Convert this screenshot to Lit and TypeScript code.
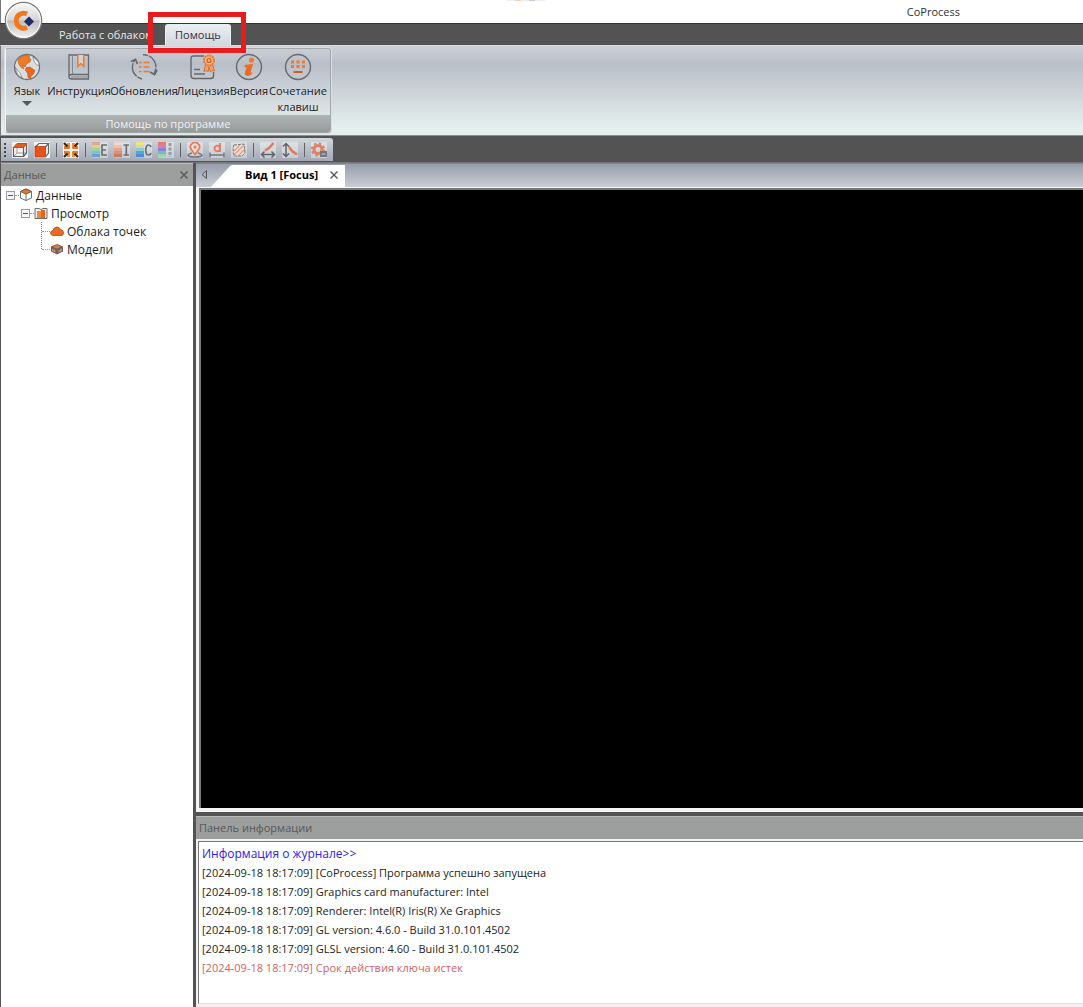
import { LitElement, html, svg, css, nothing } from "lit";
import { customElement, state } from "lit/decorators.js";
import { classMap } from "lit/directives/class-map.js";

const O = "#ee7a2b";
const D = "#66696d";

const bigIcons: Record<string, unknown> = {
  globe: svg`<circle cx="14" cy="14" r="12.5" fill="#d9dce0" stroke="#707377" stroke-width="1.3"/>
    <path d="M5 6.5Q9 2 14.500 1.800L17 4L15 5.500L18 6L17 9L13.500 11L12 14L9.500 12.500L11 16L8 14.500L5.500 10.500Z" fill="#f27a25" stroke="#a75420" stroke-width=".5"/>
    <path d="M13 14.500L17 14L22 17.500L20.500 21L18 23.500L17.500 26L15 24.500L14.500 20L12.500 17.500Z" fill="#f0641c" stroke="#a75420" stroke-width=".5"/>
    <path d="M20 4L25.500 9L26 13L23 11L21 8ZM2 14L7 20L9 25L5 22Z" fill="#f4f4f4" stroke="#6c6e72" stroke-width=".6"/>`,
  book: svg`<path d="M4 24V2H23.500V21.500H6.500Q4 21.500 4 24Q4 26 6.500 26H23.500V22" fill="none" stroke="${D}" stroke-width="1.3"/>
    <path d="M7.500 2V21" stroke="#85878a"/><path d="M6 24H23" stroke="#85878a"/>
    <path d="M12.800 2V13.500L15.800 10.500L18.800 13.500V2" fill="#d9d2cf" stroke="${O}" stroke-width="1.500"/>`,
  update: svg`<path d="M12 26A12.200 12.200 0 0 1 4.500 7.500M13 1.800A12.200 12.200 0 0 1 24.300 20" fill="none" stroke="${D}" stroke-width="1.400" stroke-dasharray="5 1 14 1"/>
    <path d="M1 8.500L5.500 6.500L7.500 11M20 19L24.500 21.500L27 17" fill="none" stroke="${D}" stroke-width="1.800"/>
    <path d="M9 9.500h2.500M9 14h2.500M9 18.500h2.500M13.500 9.500h6M13.500 14h6M13.500 18.500h6" stroke="${O}" stroke-width="1.500"/>`,
  license: svg`<path d="M15 3H4.500Q2 3 2 5.500V22.500Q2 25.500 5 25.500H22Q24.500 25.500 24.500 23V19" fill="none" stroke="${D}" stroke-width="1.400"/>
    <path d="M5 16.500H11M5 21H16" stroke="${D}" stroke-width="1.300"/>
    <path d="M16.500 11.500L15 18.500L17.500 17.500L19 19L20 14L21.500 19L23 17.500L25.500 18L23.500 11.500" fill="#e6a37a" stroke="#d5702d"/>
    <circle cx="20" cy="7.500" r="5" fill="#efb48c" stroke="${O}" stroke-width="2" stroke-dasharray="2 .6"/>
    <circle cx="20" cy="7.500" r="2" fill="none" stroke="#c8601e" stroke-width="1.200"/>`,
  info: svg`<circle cx="14" cy="14" r="12.500" fill="none" stroke="${D}" stroke-width="1.400"/>
    <circle cx="16.500" cy="7" r="2.600" fill="${O}"/>
    <path d="M10 11.800L18 11L15.500 19.500Q15.500 20.500 18 18.500Q16 23 12.500 23Q9 22.500 10 19L11.500 14.500L9.500 14Z" fill="#ee6c22"/>`,
  keys: svg`<circle cx="14" cy="14" r="12.500" fill="none" stroke="${D}" stroke-width="1.400"/>
    <g fill="${O}"><rect x="7" y="7.500" width="3" height="3"/><rect x="12.500" y="7.500" width="3" height="3"/><rect x="18" y="7.500" width="3" height="3"/>
    <rect x="7" y="12" width="3" height="3"/><rect x="12.500" y="12" width="3" height="3"/><rect x="18" y="12" width="3" height="3"/>
    <rect x="9.500" y="18" width="9" height="2" fill="#d95a1c"/></g>`,
};

const bars = (colors: string[]) =>
  colors.map((c, i) => svg`<rect x="0" y="${i * 3}" width="8" height="3.200" fill="${c}"/>`);

const smallIcons: Record<string, unknown> = {
  boxTop: svg`<path d="M5 5V11H14M5 11L1.500 14.500" fill="none" stroke="#9b9ea1"/><path d="M1.500 5.500H11.500V14.500H1.500ZM11.500 14.500L14.500 11V2" fill="none" stroke="#5d6063" stroke-width="1.200"/><path d="M1.200 5.500L5 1.500H15L11.500 5.500Z" fill="#ea5a1d" stroke="#b5532c"/>`,
  boxFront: svg`<path d="M1 5L5 1.500H14.500L11.500 5M14.500 1.500V11L11.500 15" fill="none" stroke="#64676a" stroke-width="1.200"/><rect x="1" y="4.500" width="10.500" height="10.500" fill="#ea5317" stroke="#a6421b" stroke-width=".8"/>`,
  fit: svg`<path d="M4 1H7V6.500H4ZM9 1H12V6.500H9ZM4 9.500H7V15H4ZM9 9.500H12V15H9Z" fill="#f58f2c"/><path d="M1 4H6.500V7H1ZM9.500 4H15V7H9.500ZM1 9H6.500V12H1ZM9.500 9H15V12H9.500Z" fill="#f0741f"/><path d="M1 1L4.500 4.500M15 1L11.500 4.500M1 15L4.500 11.500M15 15L11.500 11.500" stroke="#3b2a20" stroke-width="2.400"/>`,
  e: svg`${bars(["#e2a58e", "#ead07d", "#9ed3a0", "#76c2d6", "#6ba3cf"])}<path d="M15 3H10V13H15M10 8H14" fill="none" stroke="#6d6f73" stroke-width="1.700"/>`,
  i: svg`${bars(["#f1d4cb", "#edbfb1", "#e4a594", "#dc8e79", "#cf7860"])}<path d="M9.500 3H15M9.500 13H15M12.300 3V13" fill="none" stroke="#6d6f73" stroke-width="1.700"/>`,
  c: svg`${bars(["#efe08a", "#d6dc93", "#8ccbd3", "#4fa9dc", "#4e8dd0"])}<path d="M15 5Q14.500 3 12.500 3Q9.800 3 9.800 8Q9.800 13 12.500 13Q14.500 13 15 11" fill="none" stroke="#6d6f73" stroke-width="1.700"/>`,
  scale: svg`<g>${bars(["#e57a74", "#d281b3", "#8c83cf", "#6cbbd2", "#9ad7a6"])}</g><path d="M12 1V15" stroke="#999ca0" stroke-width="3" stroke-dasharray="3 1.500"/>`,
  pin: svg`<path d="M5 11Q1 12 1 13.500Q2 15 8 15T15 13.500Q15 12 11 11" fill="none" stroke="#74777b" stroke-width="1.600"/><path d="M8 12.500L4.300 7.500A4.500 4.500 0 1 1 11.700 7.500Z" fill="#f0ddd5" stroke="#e07b5c" stroke-width="1.700"/><circle cx="8" cy="5" r="1.500" fill="#e07b5c"/>`,
  dist: svg`<path d="M11 1V10M11 7A2.800 2.800 0 1 1 11 6" fill="none" stroke="#e07b5c" stroke-width="1.800"/><path d="M1 10.500V15.500M15 10.500V15.500M1 13H15" stroke="#74777b" stroke-width="1.500"/>`,
  area: svg`<path d="M4 3L13 2L14 11L11 14H3L2 6Z" fill="#eeddd5"/><path d="M3 9L9 3M3 13L13 3M7 14L14 7" stroke="#e2a085" stroke-width="1.300"/><path d="M3 3L13 2L14 11L11 14H3L2 6Z" fill="none" stroke="#777a7e" stroke-dasharray="3 1"/>`,
  horiz: svg`<path d="M5 8.500L9 6L13.500 1" fill="none" stroke="#e07b5c" stroke-width="2.600"/><path d="M2 12.500H14M4.500 9.500L1.500 12.500L4.500 15.500M11.500 9.500L14.500 12.500L11.500 15.500" fill="none" stroke="#606366" stroke-width="1.500"/>`,
  vert: svg`<path d="M7 5L10 9L15 12.500" fill="none" stroke="#e07b5c" stroke-width="2.600"/><path d="M4 2V14M1 4.500L4 1.500L7 4.500M1 11.500L4 14.500L7 11.500" fill="none" stroke="#606366" stroke-width="1.500"/>`,
  gear: svg`<circle cx="7" cy="7.500" r="4" fill="none" stroke="#dd8065" stroke-width="3"/><circle cx="7" cy="7.500" r="6.200" fill="none" stroke="#dd8065" stroke-width="1.800" stroke-dasharray="2.500 2.370"/><rect x="9" y="9" width="7" height="6" fill="#74777b"/><path d="M10.500 12H14.500" stroke="#c9cbce"/>`,
};

const treeIcons: Record<string, unknown> = {
  cube: svg`<path d="M7 1L12.500 3.500V10L7 12.500L1.500 10V3.500Z" fill="#fff" stroke="#6c6e70"/><path d="M7 1L12.500 3.500L7 6L1.500 3.500Z" fill="#ee7224" stroke="#7d5a48"/><path d="M7 6V13" stroke="#6c6e70"/>`,
  view: svg`<path d="M1 2.500H5L7 3.500L9 2.500H13V12.500H1Z" fill="#f9ede4" stroke="#6d6f71"/><rect x="3" y="5" width="4" height="7" fill="#ee8a3b"/><rect x="7" y="4" width="4" height="8" fill="#e8651d"/>`,
  cloud: svg`<path d="M3 11.500Q.500 11 .500 8.800Q.800 6.800 3 6.500Q4 3 7 3Q9.500 3 10.500 5.500Q13.500 6.200 13.500 9Q13.500 11.500 11 11.500Z" fill="#ee6a1e" stroke="#9d4716" stroke-width=".8"/>`,
  model: svg`<path d="M7 2L13 4.500V9.500L7 12.500L1 9.500V4.500Z" fill="#6b6562"/><path d="M7 3L11 4.700L7 6.500L3 4.700Z" fill="#ed7a34"/><path d="M2 6.500L5.500 8.500V10.500L2 9ZM8.500 8.500L12 6.500V9L8.500 10.500Z" fill="#d98a5c"/>`,
};

const ribbon = [
  { icon: "globe", label: "Язык", drop: true },
  { icon: "book", label: "Инструкция" },
  { icon: "update", label: "Обновления" },
  { icon: "license", label: "Лицензия" },
  { icon: "info", label: "Версия" },
  { icon: "keys", label: "Сочетание клавиш" },
];

const tools: [string, string][][] = [
  [["boxTop", "Вид сверху"], ["boxFront", "Вид спереди"]],
  [["fit", "Показать всё"]],
  [["e", "Высота"], ["i", "Интенсивность"], ["c", "Цвет"], ["scale", "Шкала"]],
  [["pin", "Точка"], ["dist", "Расстояние"], ["area", "Площадь"]],
  [["horiz", "По горизонтали"], ["vert", "По вертикали"]],
  [["gear", "Настройки"]],
];

const stamp = "[2024-09-18 18:17:09]";
const log = [
  { text: "[CoProcess] Программа успешно запущена" },
  { text: "Graphics card manufacturer: Intel" },
  { text: "Renderer: Intel(R) Iris(R) Xe Graphics" },
  { text: "GL version: 4.6.0 - Build 31.0.101.4502" },
  { text: "GLSL version: 4.60 - Build 31.0.101.4502" },
  { text: "Срок действия ключа истек", error: true },
];

const closeGlyph = html`<svg width="8" height="8" viewBox="0 0 8 8"><path d="M0.500 0.500L7.500 7.500M7.500 0.500L0.500 7.500" stroke="currentColor" stroke-width="1.400" /></svg>`;

@customElement("app-root")
export class AppRoot extends LitElement {
  static styles = css`
    :host {
      display: flex;
      flex-direction: column;
      height: 100vh;
      overflow: hidden;
      box-sizing: border-box;
      background: #535353;
      color: #1d1d1f;
      font: 11px/16px "Open Sans", "Noto Sans", sans-serif;
    }
    * { box-sizing: border-box; }
    svg { display: block; flex: none; }
    button {
      font: inherit;
      color: inherit;
      background: none;
      border: 0;
      padding: 0;
      margin: 0;
    }
    .top { position: relative; }
    .titlebar {
      height: 23px;
      padding-right: 123px;
      display: flex;
      align-items: center;
      justify-content: flex-end;
      background: linear-gradient(90deg, #eee 0 8px, #f8cdb8 8px 14px, #eee 14px 22px, #c9cbdd 22px 28px, #eee 28px) 506px 0 / 38px 1px no-repeat #fff;
      border-left: 1px solid #777;
      color: #333;
    }
    .titlebar h1 { margin: 0; font: inherit; }
    .menu {
      height: 22px;
      display: flex;
      align-items: flex-end;
      gap: 12px;
      padding-left: 59px;
      border-top: 1px solid #333;
      background: #535353;
    }
    .menu button { height: 20px; color: #e8e8e8; }
    .menu .current {
      height: 21px;
      padding: 0 9px;
      color: #303236;
      border: 1px solid #dff3f6;
      border-bottom: 0;
      border-radius: 3px 3px 0 0;
      background: linear-gradient(#eceef1, #d3d7de);
    }
    .logo { position: absolute; left: 4px; top: 1px; }
    .marker {
      position: absolute;
      left: 148px;
      top: 12px;
      width: 98px;
      height: 41px;
      border: 5px solid #e81c1f;
      pointer-events: none;
    }
    .ribbon {
      flex: none;
      height: 90px;
      padding: 2px 4px;
      display: flex;
      border-top: 1px solid #d9dde2;
      border-left: 1px solid #777;
      background: linear-gradient(#cdd1d8, #b9bfc9 18px, #c9cfd5 40px, #e4eeed 80px);
    }
    .group {
      display: flex;
      flex-direction: column;
      border: 1px solid #a4a8ab;
      border-left-color: #f2f4f5;
      border-radius: 3px;
      overflow: hidden;
      box-shadow: 0 0 0 1px #d9dfe1;
    }
    .commands {
      flex: 1;
      display: grid;
      grid-template-columns: 38px 66px 64px 54px 38px 60px;
      padding: 4px 2px 0;
      align-items: start;
    }
    .commands button {
      display: flex;
      flex-direction: column;
      align-items: center;
      gap: 2px;
      white-space: nowrap;
    }
    .commands .wrap { white-space: normal; }
    .group-title {
      height: 17px;
      line-height: 17px;
      text-align: center;
      color: #f1f1f1;
      background: linear-gradient(#b0b4b4, #979a9a);
    }
    .toolrow {
      flex: none;
      height: 28px;
      display: flex;
      padding: 2px 0 1px 1px;
      border-top: 1px solid #8d8f8f;
      border-bottom: 1px solid #777;
    }
    .toolbar {
      display: flex;
      align-items: center;
      padding: 0 3px 0 0;
      border-radius: 0 3px 0 0;
      background: linear-gradient(#d2d6dc, #a2a9b5);
    }
    .grip {
      width: 2px;
      height: 14px;
      margin: 0 3px;
      background: repeating-linear-gradient(#44474c 0 2px, transparent 2px 4px);
    }
    .tool { width: 22px; height: 22px; display: grid; place-items: center; }
    .tool svg { background: #ffffff60; }
    .bright svg { background: #f6f4f3; }
    .sep { width: 1px; height: 14px; margin: 0 3px; background: #5f6368; }
    .body {
      flex: 1;
      min-height: 0;
      display: grid;
      grid-template-columns: 192px minmax(0, 1fr);
      gap: 3px;
      padding-left: 1px;
    }
    .side { display: flex; flex-direction: column; background: #fff; }
    .caption {
      flex: none;
      height: 23px;
      margin: 0;
      padding: 0 5px 1px 3px;
      display: flex;
      align-items: center;
      justify-content: space-between;
      font: inherit;
      color: #55575a;
      background: #9d9f9e;
      border-top: 1px solid #b9bbbb;
    }
    .tree { margin: 0; padding: 0 0 0 5px; list-style: none; font-size: 12px; line-height: 17px; }
    .tree ul { margin: 0; padding: 0; list-style: none; }
    .node { display: flex; align-items: center; height: 18px; gap: 3px; }
    .node::before { content: ""; order: 1; width: 4px; margin: 0 -3px; border-top: 1px dotted #999; }
    .node .expander { order: 0; }
    .node svg, .node span { order: 2; }
    .level2 .node { padding-left: 15px; }
    .level3 { position: relative; }
    .level3 .node { padding-left: 38px; }
    .level3 .node::before { width: 8px; margin-left: -2px; }
    .branch {
      position: absolute;
      left: 35px;
      top: 0;
      height: 27px;
      border-left: 1px dotted #888;
    }
    .expander {
      width: 9px;
      height: 9px;
      border: 1px solid #9a9da3;
      background: linear-gradient(#3c5a9a, #3c5a9a) center / 5px 1px no-repeat #f5f5f5;
    }
    .main { display: flex; flex-direction: column; min-height: 0; }
    .tabs {
      flex: none;
      height: 24px;
      display: flex;
      align-items: flex-end;
      background: linear-gradient(#979eaa, #c9cdd4);
      border-top: 1px solid #7f858e;
    }
    .scroll { width: 15px; height: 23px; padding-bottom: 3px; display: grid; place-items: center; color: #555; }
    .slope { width: 22px; height: 22px; }
    .tab {
      height: 22px;
      display: flex;
      align-items: center;
      gap: 12px;
      padding: 0 7px 2px 12px;
      color: #555;
      background: #fff;
    }
    .tab-name { color: #000; font-weight: 700; }
    .frame {
      flex: 1;
      min-height: 0;
      padding: 1px 0 4px 3px;
      background: #f5f5f5;
    }
    .scene {
      display: block;
      width: 100%;
      height: 100%;
      background: #000;
      border: solid #77797b;
      border-width: 2px 0 0 2px;
    }
    .info {
      flex: none;
      height: 191px;
      margin-top: 4px;
      display: flex;
      flex-direction: column;
      background: #f3f3f3;
    }
    .log {
      flex: 1;
      margin: 2px 0 3px 2px;
      padding: 2px 0 0 3px;
      background: #fff;
      border: solid #77797b;
      border-width: 1px 0 0 1px;
      border-bottom: 1px solid #e3e3e3;
      line-height: 19px;
    }
    .log p { margin: 0; }
    .log a { display: block; font-size: 12px; color: #2a22f0; text-decoration: none; }
    .log .error { color: #cf6465; }
  `;

  @state() private active = 1;

  private command(c: { icon: string; label: string; drop?: boolean }) {
    return html`<button class=${classMap({ wrap: c.icon === "keys" })}>
      <svg width="28" height="28" viewBox="0 0 28 28">${bigIcons[c.icon]}</svg>
      <span>${c.label}</span>
      ${c.drop ? html`<svg width="10" height="5" viewBox="0 0 10 5"><path d="M0 0H10L5 5Z" fill="#55585c" /></svg>` : nothing}
    </button>`;
  }

  private node(icon: string, label: string, expand: boolean) {
    return html`<div class="node">
      ${expand ? html`<button class="expander" aria-label="Свернуть"></button>` : nothing}
      <svg width="14" height="14" viewBox="0 0 14 14">${treeIcons[icon]}</svg><span>${label}</span>
    </div>`;
  }

  render() {
    return html`
      <header class="top">
        <div class="titlebar"><h1>CoProcess</h1></div>
        <nav class="menu">
          ${["Работа с облаком", "Помощь"].map(
            (t, i) => html`<button class=${classMap({ current: i === this.active })} @click=${() => (this.active = i)}>${t}</button>`,
          )}
        </nav>
        <button class="logo" aria-label="Меню">
          <svg width="39" height="39" viewBox="0 0 39 39">
            <defs><linearGradient id="m" x2="0" y2="1"><stop stop-color="#fafafa" /><stop offset=".48" stop-color="#d6d6d6" /><stop offset=".52" stop-color="#bdbdbd" /><stop offset="1" stop-color="#f4f4f4" /></linearGradient></defs>
            <circle cx="19.500" cy="19.500" r="18.200" fill="url(#m)" stroke="#777" stroke-width="1.200" />
            <circle cx="19.500" cy="19.500" r="16.800" fill="none" stroke="#fff" stroke-width="1" />
            <path d="M23 13A7.500 7.500 0 1 0 23 26.500" fill="none" stroke="#f0781f" stroke-width="4.800" />
            <path d="M25 15.500L30 20.500L25 25.500L20 20.500Z" fill="#1f2a68" />
          </svg>
        </button>
        <div class="marker"></div>
      </header>
      <section class="ribbon">
        <div class="group">
          <div class="commands">${ribbon.map((c) => this.command(c))}</div>
          <div class="group-title">Помощь по программе</div>
        </div>
      </section>
      <div class="toolrow">
        <div class="toolbar" role="toolbar">
          <span class="grip"></span>
          ${tools.map(
            (g, gi) => html`${gi ? html`<span class="sep"></span>` : nothing}
              ${g.map(([icon, name]) => html`<button class=${classMap({ tool: true, bright: gi < 2 })} aria-label=${name}>
                <svg width="16" height="16" viewBox="0 0 16 16">${smallIcons[icon]}</svg>
              </button>`)}`,
          )}
        </div>
      </div>
      <div class="body">
        <aside class="side">
          <h2 class="caption">Данные<button aria-label="Закрыть">${closeGlyph}</button></h2>
          <ul class="tree">
            <li>
              ${this.node("cube", "Данные", true)}
              <ul class="level2">
                <li>
                  ${this.node("view", "Просмотр", true)}
                  <ul class="level3">
                    <li class="branch" role="presentation"></li>
                    <li>${this.node("cloud", "Облака точек", false)}</li>
                    <li>${this.node("model", "Модели", false)}</li>
                  </ul>
                </li>
              </ul>
            </li>
          </ul>
        </aside>
        <main class="main">
          <div class="tabs">
            <button class="scroll" aria-label="Назад"><svg width="6" height="9" viewBox="0 0 6 9"><path d="M5.500 .500V8.500L1 4.500Z" fill="none" stroke="currentColor" /></svg></button>
            <svg class="slope" viewBox="0 0 22 21" preserveAspectRatio="none"><path d="M0 21L17 3Q19 0 22 0V21Z" fill="#fff" /></svg>
            <div class="tab"><span class="tab-name">Вид 1 [Focus]</span><button aria-label="Закрыть вид">${closeGlyph}</button></div>
          </div>
          <div class="frame"><canvas class="scene"></canvas></div>
          <section class="info">
            <h2 class="caption">Панель информации</h2>
            <div class="log">
              <a href="#log">Информация о журнале&gt;&gt;</a>
              ${log.map((l) => html`<p class=${classMap({ error: !!l.error })}>${stamp} ${l.text}</p>`)}
            </div>
          </section>
        </main>
      </div>
    `;
  }
}
